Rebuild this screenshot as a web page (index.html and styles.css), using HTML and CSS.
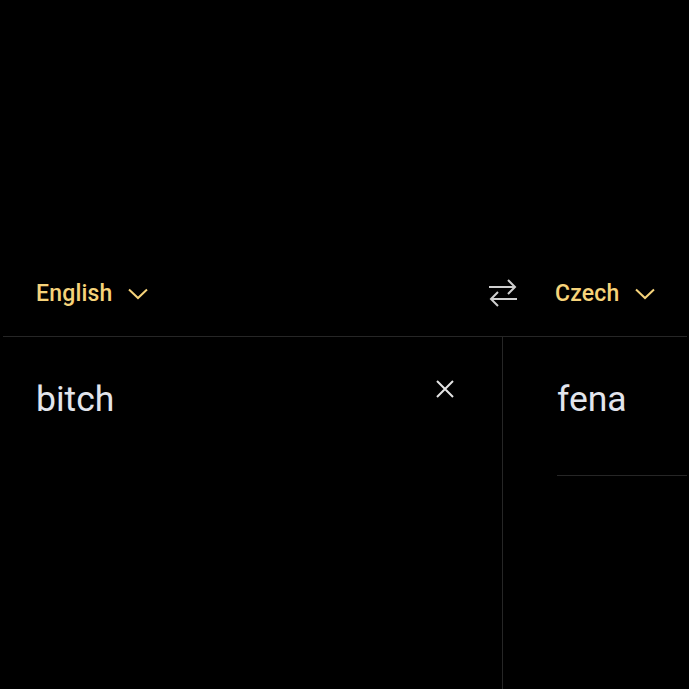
FILE: index.html
```html
<!DOCTYPE html>
<html>
<head>
<meta charset="utf-8">
<link rel="stylesheet" href="styles.css">
</head>
<body>
<div class="app">
  <div class="langbar">
    <div class="lang lang-src">
      <span>English</span>
      <svg class="chev" width="20" height="12" viewBox="0 0 20 12"><path d="M1 1.5 L10 10 L19 1.5" fill="none" stroke="#f6d37a" stroke-width="2"/></svg>
    </div>
    <svg class="swap" width="30" height="30" viewBox="0 0 30 30"><path d="M1 10 H27 M20 3 L27 10 L20 17" fill="none" stroke="#cfcfcf" stroke-width="2"/><path d="M29 22 H3 M10 15 L3 22 L10 29" fill="none" stroke="#cfcfcf" stroke-width="2"/></svg>
    <div class="lang lang-dst">
      <span>Czech</span>
      <svg class="chev" width="20" height="12" viewBox="0 0 20 12"><path d="M1 1.5 L10 10 L19 1.5" fill="none" stroke="#f6d37a" stroke-width="2"/></svg>
    </div>
  </div>
  <div class="panels">
    <div class="panel panel-src">
      <div class="text">bitch</div>
      <svg class="clear" width="18" height="18" viewBox="0 0 18 18"><path d="M1 1 L17 17 M17 1 L1 17" stroke="#e4e4e4" stroke-width="2"/></svg>
    </div>
    <div class="panel panel-dst">
      <div class="text">fena</div>
      <div class="rule"></div>
    </div>
  </div>
</div>
</body>
</html>
```
FILE: styles.css
```css
html, body {
  margin: 0;
  padding: 0;
  background: #000;
  height: 100%;
  overflow: hidden;
}
.app {
  width: 689px;
  height: 689px;
  display: flex;
  flex-direction: column;
  font-family: Roboto, "Liberation Sans", sans-serif;
}
.langbar {
  margin-top: 250px;
  height: 86px;
  display: flex;
  align-items: center;
  padding: 0 0 0 36px;
}
.lang {
  display: flex;
  align-items: center;
  color: #f6d37a;
  font-size: 23px;
  letter-spacing: 0.2px;
  font-weight: 500;
  gap: 15px;
}
.lang-src {
  width: 452px;
}
.swap {
  margin-top: -2px;
}
.lang-dst {
  margin-left: 37px;
}
.chev {
  margin-top: 2px;
}
.panels {
  flex: 1;
  display: flex;
  margin: 0 2px 0 3px;
  border-top: 1px solid #262626;
}
.panel {
  position: relative;
}
.panel-src {
  width: 500px;
  border-right: 1px solid #262626;
  display: flex;
  justify-content: space-between;
  align-items: flex-start;
  padding: 0 48px 0 33px;
  box-sizing: border-box;
}
.text {
  font-size: 35.5px;
  color: #e2e5ec;
  margin-top: 42px;
  line-height: 40px;
}
.clear {
  margin-top: 43px;
}
.panel-dst {
  flex: 1;
  padding-left: 54px;
}
.rule {
  margin-top: 56px;
  border-top: 1px solid #262626;
}
```
